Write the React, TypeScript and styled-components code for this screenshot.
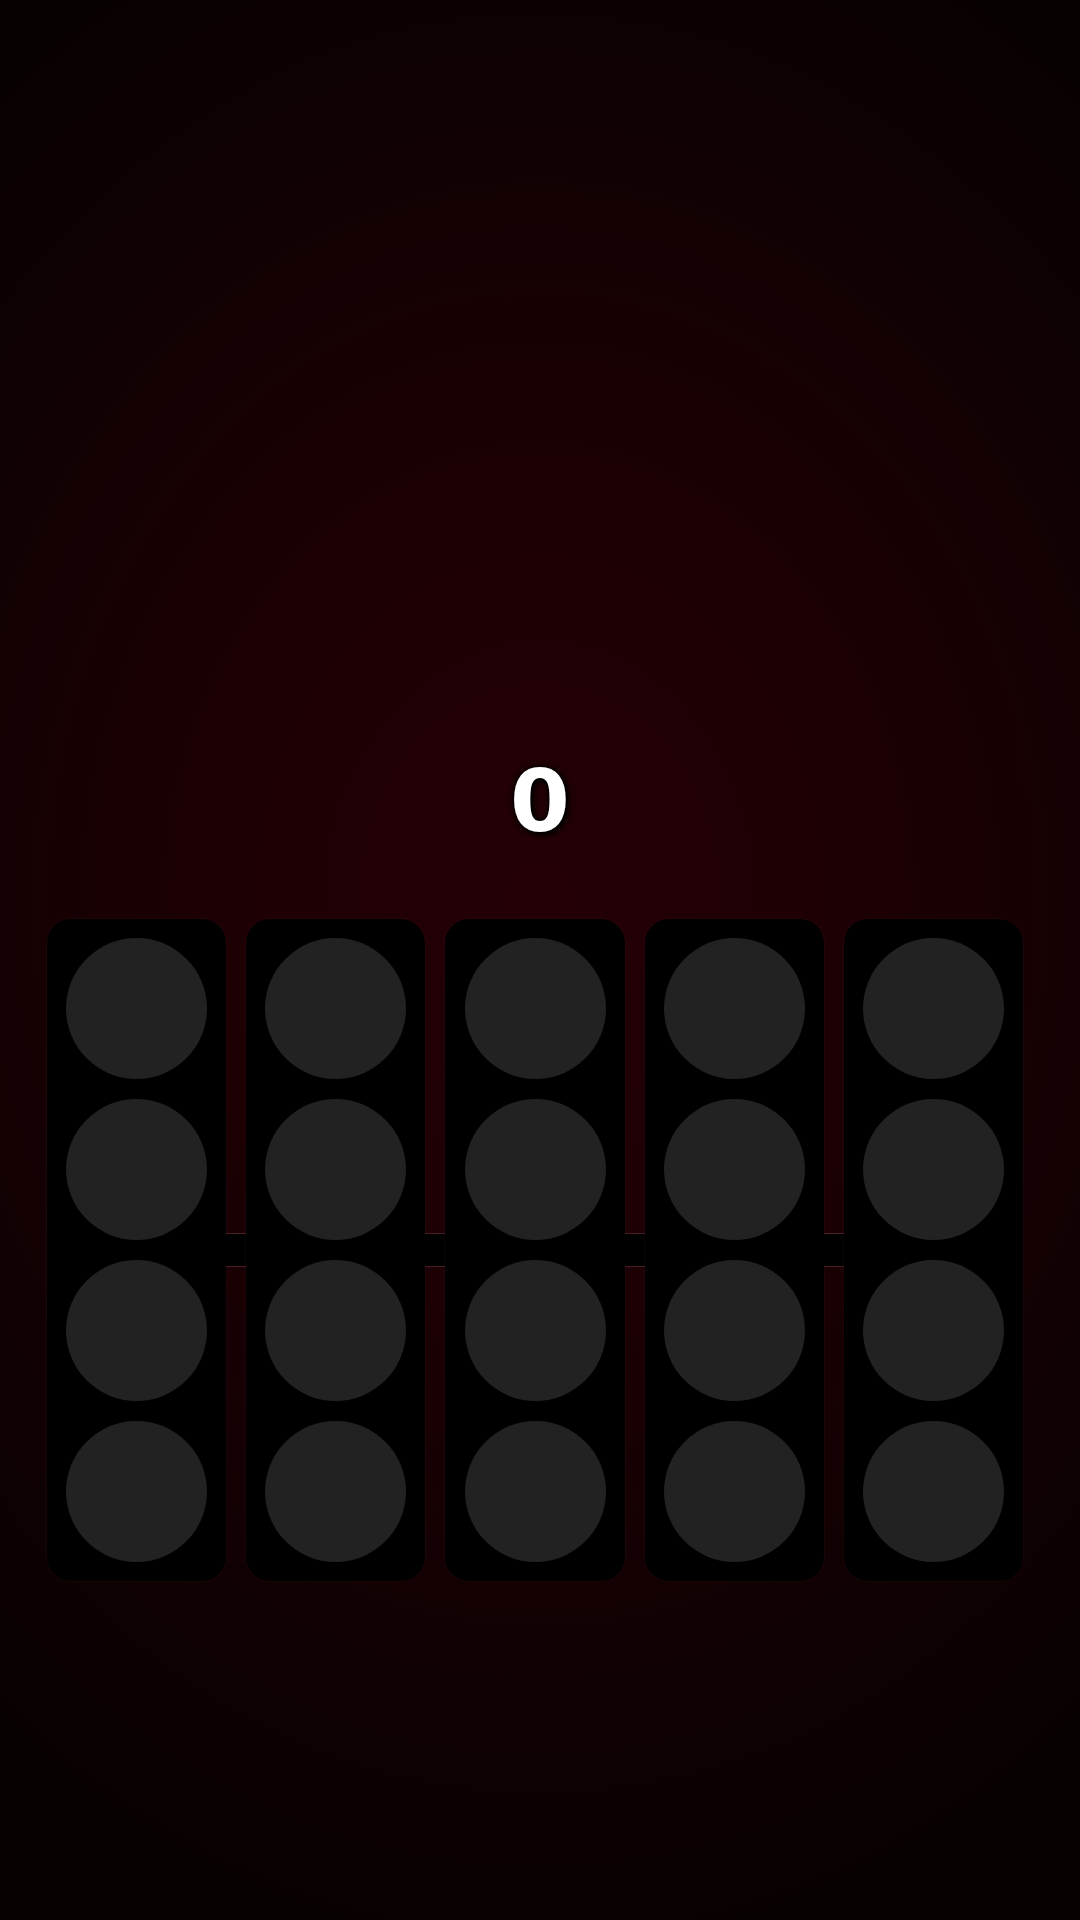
import { Fragment } from "react"
import styled, { createGlobalStyle } from "styled-components"

const GlobalStyle = createGlobalStyle`
    html, body {
        margin: 0;
        padding: 0;
        background: #080102;
    }
    * {
        box-sizing: border-box;
    }
`

const Screen = styled.div`
    width: 1080px;
    min-height: 1920px;
    display: flex;
    flex-direction: column;
    align-items: flex-start;
    padding-top: 759px;
    background: radial-gradient(ellipse 80% 55% at 50% 47%, #240006 0%, #1c0004 40%, #100102 75%, #080102 100%);
    font-family: "DejaVu Sans", "Liberation Sans", sans-serif;
`

const Score = styled.div`
    align-self: center;
    height: 85px;
    font-size: 86px;
    line-height: 85px;
    font-weight: bold;
    color: #ffffff;
    text-shadow: 0 0 3px #000, 0 0 6px #000, 3px 3px 6px #000;
`

const Board = styled.div`
    display: flex;
    align-items: center;
    width: 976px;
    margin-top: 75px;
    margin-left: 47px;
`

const Reel = styled.div`
    flex: 1;
    display: flex;
    flex-direction: column;
    align-items: center;
    gap: 20px;
    padding: 19px 0;
    background: #000;
    border-radius: 24px;
    box-shadow: 0 0 0 1px rgba(90, 40, 50, 0.12);
`

const Link = styled.div`
    width: 20px;
    height: 34px;
    background: #000;
    border-top: 1px solid rgba(120, 50, 60, 0.6);
    border-bottom: 1px solid rgba(120, 50, 60, 0.6);
`

const Light = styled.div<{ $on?: boolean }>`
    width: 141px;
    height: 141px;
    border-radius: 50%;
    background: ${p => (p.$on ? "#d32f2f" : "#222222")};
`

const reels = [0, 1, 2, 3, 4]
const lights = [0, 1, 2, 3]

const App = () => {
    return (
        <Screen>
            <GlobalStyle />
            <Score>0</Score>
            <Board>
                {reels.map((r) => (
                    <Fragment key={r}>
                        {r > 0 && <Link />}
                        <Reel>
                            {lights.map((l) => (
                                <Light key={l} />
                            ))}
                        </Reel>
                    </Fragment>
                ))}
            </Board>
        </Screen>
    )
}

export default App
